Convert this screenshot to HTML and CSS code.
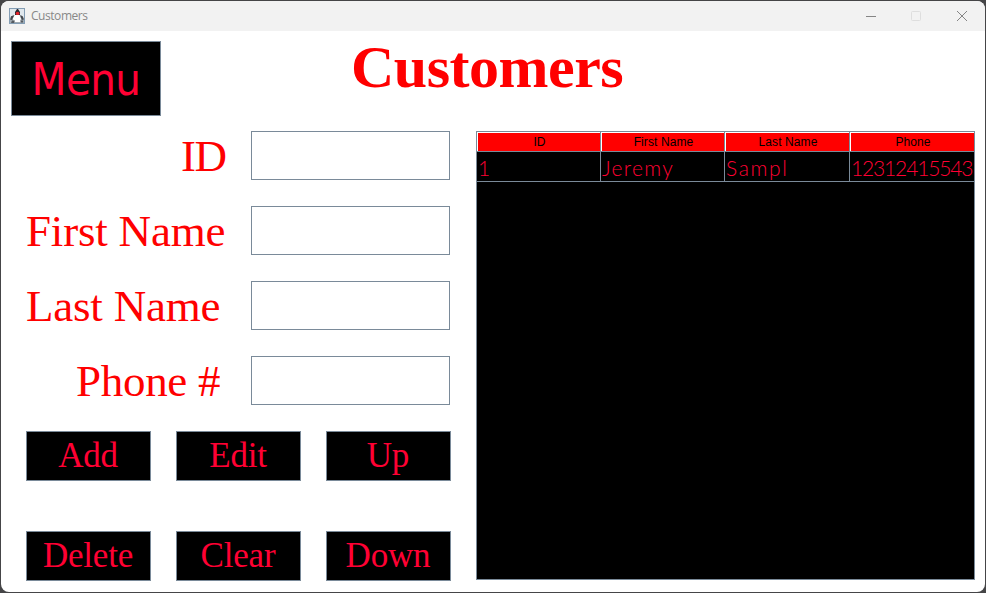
FILE: index.html
```html
<!DOCTYPE html>
<html lang="en">
<head>
<meta charset="utf-8">
<title>Customers</title>
<link rel="stylesheet" href="styles.css">
</head>
<body>
<div class="window">
  <header class="titlebar">
    <svg class="app-icon" width="16" height="16" viewBox="0 0 16 16">
      <rect x=".5" y=".5" width="15" height="15" fill="#dfe7ed" stroke="#839db4"/>
      <path d="M1 11h14v4H1z" fill="#9faab2"/>
      <path d="M5.500 6 4 10.500 5 14h7l-.5-4-2-4z" fill="#fff"/>
      <path d="M8 1 6 4v3h5V4L9 1z" fill="#292a31"/>
      <path d="M5.500 7 2 8.200 1 11.500l2 .5 1.500-3zM11.200 7l2.500 1.300 1.300 3-2 .7-1.500-3z" fill="#43474d"/>
      <path d="M3 12.500h3L5 15H2zM11 12.500h3v2h-2z" fill="#555a60"/>
      <ellipse cx="8.600" cy="5.400" rx="1.900" ry="1.600" fill="#e3222b"/>
    </svg>
    <span class="caption">Customers</span>
    <svg class="controls" width="126" height="30" viewBox="0 0 126 30" fill="none">
      <path d="M16 15.500h10" stroke="#858585"/>
      <rect x="61.500" y="10.500" width="9" height="9" rx="1" stroke="#dedede"/>
      <path d="m107 10 10 10m0-10-10 10" stroke="#858585" stroke-width="1"/>
    </svg>
  </header>
  <div class="top">
    <button class="btn menu">Menu</button>
    <h1>Customers</h1>
  </div>
  <main>
    <section class="left">
      <form class="fields">
        <label class="id" for="id">ID</label><input id="id">
        <label for="first">First Name</label><input id="first">
        <label for="last">Last Name</label><input id="last">
        <label class="phone" for="phone">Phone #</label><input id="phone">
      </form>
      <div class="actions">
        <button class="btn">Add</button><button class="btn">Edit</button><button class="btn">Up</button>
        <button class="btn">Delete</button><button class="btn">Clear</button><button class="btn">Down</button>
      </div>
    </section>
    <section class="table">
      <div class="row head"><span>ID</span><span>First Name</span><span>Last Name</span><span>Phone</span></div>
      <div class="row data"><span>1</span><span class="jeremy">Jeremy</span><span class="sampl">Sampl</span><span class="number">12312415543</span></div>
    </section>
  </main>
</div>
</body>
</html>
```
FILE: styles.css
```css
* { box-sizing: border-box; }
body { margin: 0; width: 986px; height: 593px; background: #454547; overflow: hidden; }
.window { width: 984px; height: 591px; margin: 1px; background: #fff; border-radius: 8px; overflow: hidden; }
.titlebar { height: 30px; display: flex; align-items: center; padding-left: 8px; background: #f2f2f2; }
.app-icon { margin-top: -1px; }
.caption { margin-left: 6px; font: 12px/16px "Open Sans", sans-serif; letter-spacing: -.45px; color: #888; }
.controls { margin-left: auto; margin-right: 9px; margin-top: -1px; }
.top { height: 100px; display: flex; align-items: flex-start; }
.btn { display: flex; align-items: center; justify-content: center; margin: 0; padding: 0 1px 0 0; border: 1px solid #7a8a99; border-radius: 0; background: #000; color: #ff0033; width: 125px; height: 50px; font: 35px/48px "Liberation Serif", serif; letter-spacing: -.2px; white-space: nowrap; }
.menu { width: 150px; height: 75px; margin: 10px 0 0 10px; padding: 3px 0 0; font: 45px/70px "DejaVu Sans Condensed", "DejaVu Sans", sans-serif; font-stretch: condensed; letter-spacing: -.6px; }
h1 { margin: 1px 0 0 190px; color: #f00; font: bold 60px/70px "Liberation Serif", serif; letter-spacing: -.5px; }
main { display: flex; align-items: flex-start; }
.left { width: 475px; }
.fields { display: grid; grid-template-columns: 225px 199px; grid-auto-rows: 49px; row-gap: 26px; padding-left: 25px; }
label { color: #f00; font: 45px/51px "Liberation Serif", serif; letter-spacing: -.2px; white-space: nowrap; }
.id { padding-left: 155px; letter-spacing: -1.5px; }
.phone { padding-left: 50px; letter-spacing: -.3px; }
input { width: 199px; height: 49px; border: 1px solid #7a8a99; border-radius: 0; padding: 0 4px; background: #fff; outline: 0; }
.actions { display: grid; grid-template-columns: repeat(3, 125px); gap: 50px 25px; padding: 26px 0 0 25px; }
.table { width: 499px; height: 449px; border: 1px solid #7a8a99; background: #000; }
.row { display: grid; grid-template-columns: 124px 124px 125px 124px; border-bottom: 1px solid #7a8a99; }
.row span { border-right: 1px solid #7a8a99; white-space: nowrap; }
.row span:last-child { border-right: 0; }
.head { height: 20px; background: #f00; color: #000; text-align: center; font: 12px/21px "Liberation Sans", sans-serif; }
.head span { height: 19px; padding-left: 2px; box-shadow: inset 1px 1px #fff; letter-spacing: .1px; }
.data { height: 30px; color: #ff0033; font: 300 21px/31px Lato, sans-serif; }
.data span { height: 29px; padding-left: 1px; }
.jeremy { letter-spacing: 1.3px; }
.sampl { letter-spacing: 1.6px; }
.data .number { letter-spacing: -1.15px; }
```
